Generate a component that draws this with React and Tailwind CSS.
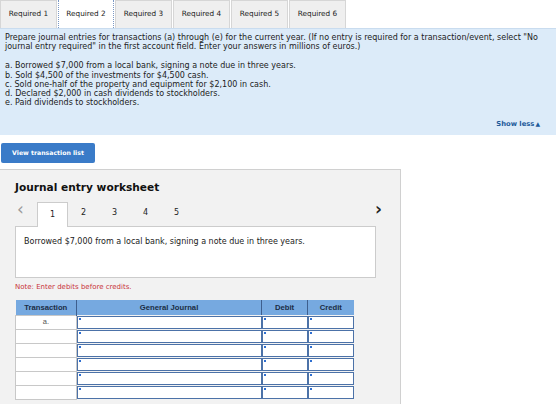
import React from 'react';

const tabs = ['Required 1', 'Required 2', 'Required 3', 'Required 4', 'Required 5', 'Required 6'];
const items = [
  'a. Borrowed $7,000 from a local bank, signing a note due in three years.',
  'b. Sold $4,500 of the investments for $4,500 cash.',
  'c. Sold one-half of the property and equipment for $2,100 in cash.',
  'd. Declared $2,000 in cash dividends to stockholders.',
  'e. Paid dividends to stockholders.',
];

function InputCell({ className }) {
  return (
    <td className={`p-0 ${className}`}>
      <div className="relative h-[13px] bg-white border-[1.5px] border-[#4c72a8]">
        <span className="absolute left-[1px] top-[1px] w-[2px] h-[2px] bg-[#2f6fd0]" />
      </div>
    </td>
  );
}

export default function App() {
  return (
    <div className="w-[560px] h-[404px] overflow-hidden bg-white text-[#222] font-['DejaVu_Sans',Verdana,sans-serif]">
      {/* tabs */}
      <div className="flex h-[28px] items-stretch">
        {tabs.map((t, i) => (
          <div
            key={t}
            className={
              i === 1
                ? 'w-[56px] flex items-center justify-center text-[7.3px] bg-white border-x border-dotted border-[#7b98c4] mr-[1px]'
                : 'w-[57px] flex items-center justify-center text-[7.3px] bg-[#efefef] border border-b-0 border-[#d6d6d6] mr-[1px]'
            }
          >
            {t}
          </div>
        ))}
      </div>

      {/* instructions */}
      <div className="w-[556px] h-[107px] bg-[#dcebf9] border-t border-[#c9dcef] px-[5px] pt-[4px] text-[8px] leading-[9.2px] relative">
        <p>
          Prepare journal entries for transactions (a) through (e) for the current year. (If no entry is required for a transaction/event, select "No journal entry required" in the first account field. Enter your answers in millions of euros.)
        </p>
        <div className="mt-[10px]">
          {items.map((it) => (
            <div key={it}>{it}</div>
          ))}
        </div>
        <div className="absolute right-[16px] bottom-[6px] text-[6.8px] font-bold text-[#1d5a9a]">
          Show less<span className="text-[6px] ml-[1px]">▲</span>
        </div>
      </div>

      {/* button */}
      <div className="mt-[8px] ml-[1px] w-[94px] h-[20px] bg-[#3a7bc8] rounded-[2px] flex items-center justify-center text-white text-[6.2px] font-bold">
        View transaction list
      </div>

      {/* worksheet */}
      <div className="mt-[6px] w-[401px] h-[240px] bg-[#f2f2f2] border-t border-r border-[#d0d0d0] pt-[10px]">
        <h2 className="ml-[15px] text-[10.6px] font-bold text-[#111]">Journal entry worksheet</h2>

        <div className="flex items-end mt-[5px] ml-[15px] mr-[18px] h-[25px]">
          <span className="w-[22px] text-[17px] leading-none text-[#9a9a9a] mb-[8px] pl-[2px]">‹</span>
          <div className="w-[31px] h-[25px] bg-white border border-b-0 border-[#ccc] flex items-center justify-center text-[8px] relative top-[1px]">1</div>
          {['2', '3', '4', '5'].map((n) => (
            <div key={n} className="w-[31px] h-[25px] flex items-center justify-center text-[8px]">{n}</div>
          ))}
          <span className="ml-auto text-[17px] leading-none font-bold text-[#222] mb-[8px]">›</span>
        </div>

        <div className="ml-[15px] w-[361px] h-[52px] bg-white border border-[#ccc] px-[8px] pt-[9px] text-[8px]">
          Borrowed $7,000 from a local bank, signing a note due in three years.
        </div>

        <div className="ml-[15px] mt-[4px] text-[7px] text-[#c9343b]">Note: Enter debits before credits.</div>

        <table className="ml-[15px] mt-[8px] border-collapse w-[338px] table-fixed font-['Liberation_Sans',Arial,sans-serif]">
          <colgroup>
            <col className="w-[61px]" />
            <col className="w-[185px]" />
            <col className="w-[46px]" />
            <col className="w-[46px]" />
          </colgroup>
          <thead>
            <tr className="h-[15px] bg-[#76a9e0] text-[7.7px] font-bold text-[#1b2d45]">
              <th className="border-r-[1.5px] border-[#3e5f8e] font-bold">Transaction</th>
              <th className="border-r-[1.5px] border-[#3e5f8e] font-bold">General Journal</th>
              <th className="border-r-[1.5px] border-[#3e5f8e] font-bold">Debit</th>
              <th className="font-bold">Credit</th>
            </tr>
          </thead>
          <tbody>
            {[0, 1, 2, 3, 4, 5].map((r) => (
              <tr key={r} className="h-[14px]">
                <td className="p-0 bg-white border border-[#c8c8c8] text-center text-[7.5px] text-[#555] align-top">
                  {r === 0 ? 'a.' : ''}
                </td>
                <InputCell />
                <InputCell />
                <InputCell />
              </tr>
            ))}
          </tbody>
        </table>
      </div>
    </div>
  );
}
